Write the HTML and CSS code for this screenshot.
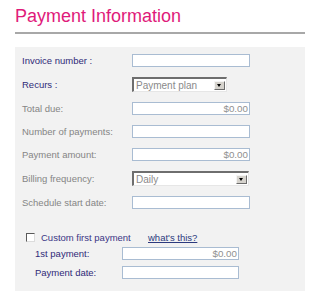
FILE: index.html
```html
<!DOCTYPE html>
<html>
<head>
<meta charset="utf-8">
<link rel="stylesheet" href="styles.css">
</head>
<body>
<h1 class="title">Payment Information</h1>
<div class="rule"></div>
<div class="panel">
  <div class="row"><span class="label strong">Invoice number :</span><span class="field"></span></div>
  <div class="row sel"><span class="label strong">Recurs :</span><span class="select short"><span class="sel-text">Payment plan</span><span class="arrow"></span></span></div>
  <div class="row gap"><span class="label">Total due:</span><span class="field money">$0.00</span></div>
  <div class="row"><span class="label">Number of payments:</span><span class="field"></span></div>
  <div class="row"><span class="label">Payment amount:</span><span class="field money">$0.00</span></div>
  <div class="row sel"><span class="label">Billing frequency:</span><span class="select"><span class="sel-text">Daily</span><span class="arrow"></span></span></div>
  <div class="row"><span class="label">Schedule start date:</span><span class="field"></span></div>
  <div class="custom">
    <div class="check-row"><span class="checkbox"></span><span class="check-label">Custom first payment</span><a class="help" href="#">what's this?</a></div>
    <div class="sub-row first"><span class="sub-label">1st payment:</span><span class="field narrow money">$0.00</span></div>
    <div class="sub-row"><span class="sub-label">Payment date:</span><span class="field narrow"></span></div>
  </div>
</div>
</body>
</html>
```
FILE: styles.css
```css
body {
  margin: 0;
  background: #ffffff;
  font-family: "Liberation Sans", Arial, sans-serif;
}
.title {
  margin: 6px 0 0 15px;
  font-size: 18px;
  line-height: 20px;
  font-weight: normal;
  color: #df1a7a;
}
.rule {
  margin: 6px 0 0 15px;
  width: 290px;
  height: 2px;
  background: #a8a8a8;
}
.panel {
  margin: 13px 0 0 15px;
  width: 290px;
  height: 244px;
  box-sizing: border-box;
  padding: 7px 0 0 7px;
  background: #f2f2f2;
  font-size: 9.5px;
}
.row {
  display: flex;
  align-items: center;
  height: 13px;
  margin-bottom: 10px;
}
.row.sel {
  height: 15px;
}
.row.gap {
  margin-top: 5px;
}
.label {
  width: 110px;
  color: #858585;
  white-space: nowrap;
}
.label.strong {
  color: #302a78;
}
.field {
  display: block;
  width: 118px;
  height: 13px;
  box-sizing: border-box;
  border: 1px solid #a9bcd2;
  background: #ffffff;
  color: #909090;
  font-size: 9.8px;
  line-height: 11px;
  padding: 0 1px;
  text-align: right;
}
.field.narrow {
  width: 117px;
}
.select {
  display: flex;
  align-items: center;
  justify-content: space-between;
  width: 117px;
  height: 15px;
  box-sizing: border-box;
  border-style: solid;
  border-width: 2px 1px 1px 2px;
  border-color: #6e6e6e #e6e6e6 #e6e6e6 #6e6e6e;
  background: #ffffff;
  padding: 0 1px 0 2px;
  color: #8a8a8a;
  font-size: 10px;
}
.select.short {
  width: 95px;
}
.arrow {
  position: relative;
  width: 11px;
  height: 9px;
  box-sizing: border-box;
  background: #d6d3cd;
  border-style: solid;
  border-width: 1px;
  border-color: #f4f4f4 #6c6c6c #6c6c6c #f4f4f4;
}
.arrow::after {
  content: "";
  position: absolute;
  left: 2px;
  top: 2px;
  border-left: 2.5px solid transparent;
  border-right: 2.5px solid transparent;
  border-top: 3px solid #000000;
}
.custom {
  margin-top: 21px;
}
.check-row {
  display: flex;
  align-items: center;
  height: 14px;
  padding-left: 4px;
}
.checkbox {
  width: 9px;
  height: 9px;
  box-sizing: border-box;
  border-style: solid;
  border-width: 1px;
  border-color: #5a5a5a #dcdcdc #dcdcdc #5a5a5a;
  background: #ffffff;
  margin-right: 6px;
}
.check-label {
  width: 107px;
  color: #3b3585;
  white-space: nowrap;
}
.help {
  color: #2c3a7e;
  text-decoration: underline;
}
.sub-row {
  display: flex;
  align-items: center;
  height: 13px;
  padding-left: 13px;
  margin-top: 6px;
}
.sub-row.first {
  margin-top: 3px;
}
.sub-label {
  width: 87px;
  color: #302a78;
  white-space: nowrap;
}
```
